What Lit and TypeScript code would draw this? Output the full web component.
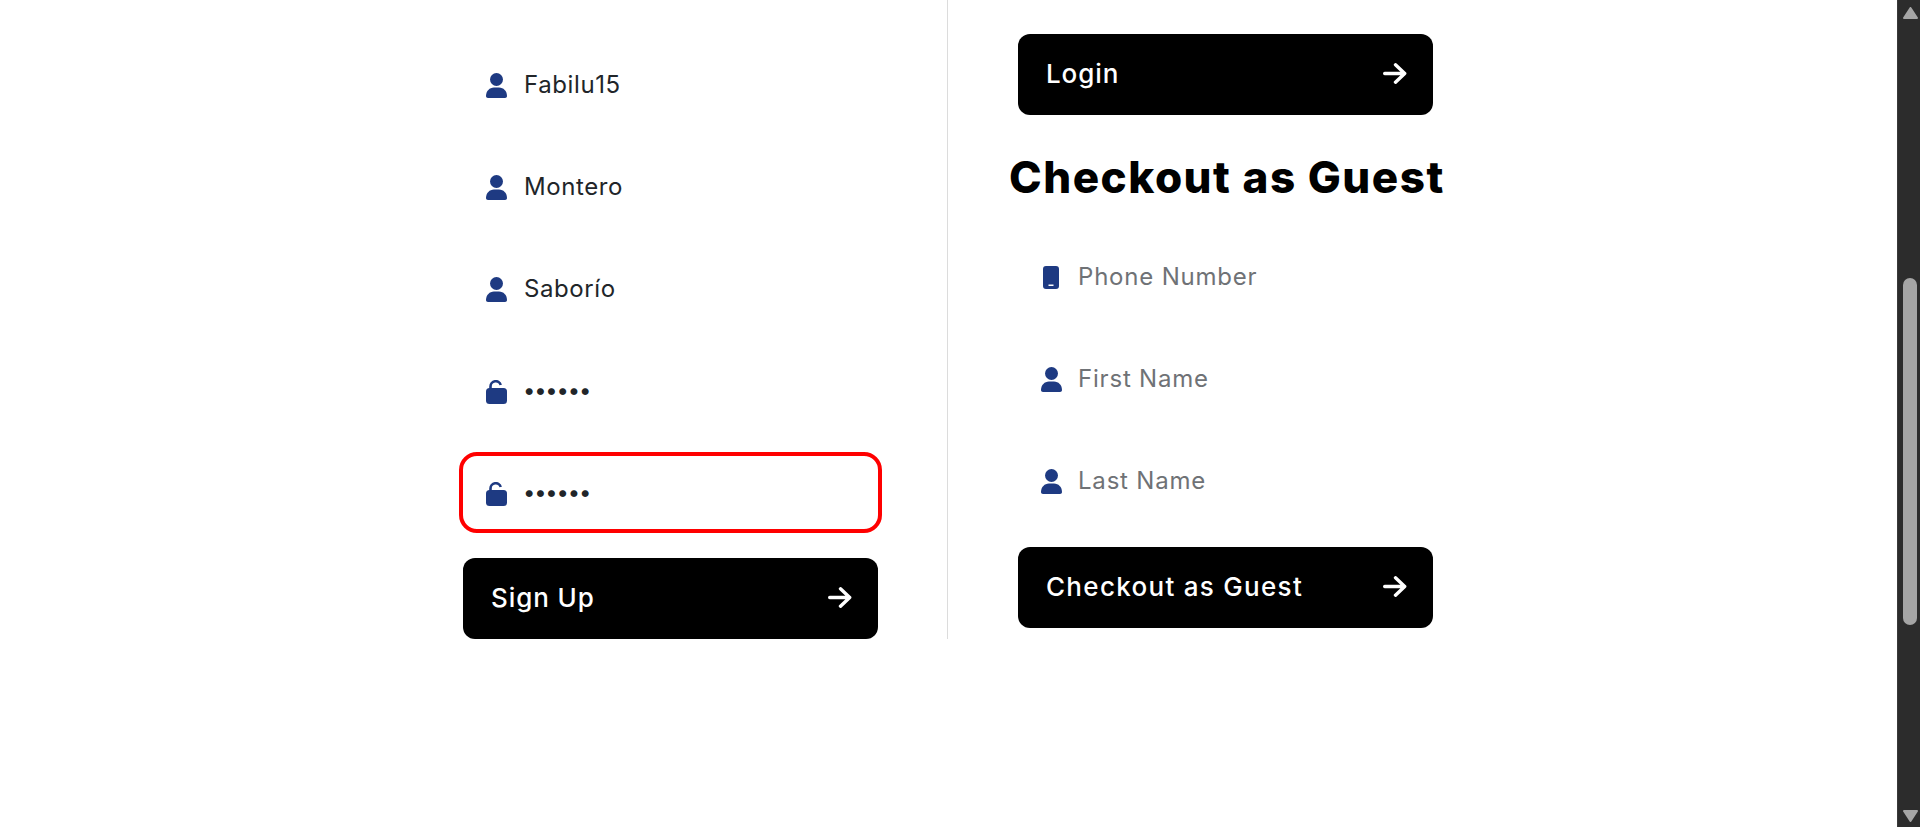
import { LitElement, html, css, svg } from 'lit';
import { customElement } from 'lit/decorators.js';

const userIcon = svg`<svg class="icon" viewBox="0 0 21 25" width="21" height="25"><circle cx="10.5" cy="6.5" r="6.5"/><path d="M0 23C0 18 3.600 14.500 8 14.500h5c4.400 0 8 3.500 8 8.500 0 1.200-.8 2-2 2H2c-1.200 0-2-.8-2-2z"/></svg>`;
const lockIcon = svg`<svg class="icon lock" viewBox="0 0 21 24" width="21" height="24"><path d="M4.500 9V6.500a5.200 5.200 0 0 1 10.200-1.500" fill="none" stroke="currentColor" stroke-width="2.600"/><rect x="0" y="8" width="21" height="16" rx="3.500"/></svg>`;
const phoneIcon = svg`<svg class="icon phone" viewBox="0 0 16 23" width="16" height="23"><path fill-rule="evenodd" d="M3 0h10a3 3 0 0 1 3 3v17a3 3 0 0 1-3 3H3a3 3 0 0 1-3-3V3a3 3 0 0 1 3-3zM5.500 18.500v1.500h5v-1.500z"/></svg>`;
const arrowIcon = svg`<svg class="arrow" viewBox="0 0 24 21" width="24" height="21"><path d="M1.700 10.500h20M12.500 1.800l9.200 8.700-9.200 8.700" fill="none" stroke="currentColor" stroke-width="3.400" stroke-linecap="round" stroke-linejoin="round"/></svg>`;

@customElement('app-root')
export class AppRoot extends LitElement {
  static styles = css`
    :host {
      display: flex;
      height: 100vh;
      overflow: hidden;
      background: #fff;
      font-family: Inter, "Liberation Sans", sans-serif;
    }

    .page {
      flex: 1;
      display: flex;
      align-items: flex-start;
      padding-left: 459px;
    }

    .left {
      width: 489px;
      height: 639px;
      padding-top: 44px;
      box-sizing: border-box;
      border-right: 1px solid #dcdcdc;
    }

    .right {
      width: 440px;
      margin-left: 70px;
      padding-top: 34px;
    }

    .field {
      width: 423px;
      height: 81px;
      margin-bottom: 21px;
      box-sizing: border-box;
      display: flex;
      align-items: center;
      padding-left: 23px;
      gap: 17px;
      border: 4px solid transparent;
      border-radius: 18px;
      font-size: 24px;
      letter-spacing: 0.6px;
      color: #212529;
    }

    .field.error {
      border-color: #f00;
      margin-bottom: 25px;
    }

    .field.placeholder {
      color: #6f7276;
      letter-spacing: 0.8px;
    }

    .right .field {
      padding-left: 19px;
      gap: 16px;
    }

    .slot {
      flex: none;
      width: 21px;
      display: flex;
      justify-content: center;
    }

    .icon {
      flex: none;
      margin-top: 2px;
      fill: #1e3a82;
      color: #1e3a82;
    }

    .icon.lock {
      margin-top: 3px;
    }

    .icon.phone {
      margin-right: 2px;
    }

    .dots {
      font-size: 22px;
      letter-spacing: -1.2px;
      margin-left: -1px;
      padding-bottom: 2px;
    }

    .btn {
      width: 415px;
      height: 81px;
      box-sizing: border-box;
      margin-left: 4px;
      padding: 0 26px 2px 28px;
      display: flex;
      align-items: center;
      justify-content: space-between;
      background: #000;
      color: #fff;
      border-radius: 12px;
      font-size: 26px;
      font-weight: 500;
      letter-spacing: 0.9px;
    }

    .right .btn {
      margin-left: 0;
    }

    .arrow {
      flex: none;
    }

    h2 {
      margin: 35px 0 32px -9px;
      font-size: 44px;
      line-height: 54px;
      font-weight: 800;
      letter-spacing: 1.5px;
      color: #000;
      white-space: nowrap;
    }

    /* collapses with the 21px margin under the last field */
    .right .btn.guest {
      margin-top: 26px;
      letter-spacing: 1.3px;
    }

    .scrollbar {
      flex: none;
      width: 23px;
      height: 100%;
      background: #2c2c2c;
      border-left: 1px solid #3a3a3a;
      box-sizing: border-box;
      display: flex;
      flex-direction: column;
      align-items: center;
      padding: 7px 0 5px 2px;
    }

    .track {
      flex: 1;
      align-self: stretch;
      padding: 259px 0 0 3px;
    }

    .thumb {
      width: 14px;
      height: 347px;
      border-radius: 7px;
      background: #a5a5a5;
    }

    .tri {
      flex: none;
      fill: #a5a5a5;
      stroke: #a5a5a5;
      stroke-width: 2;
      stroke-linejoin: round;
    }
  `;

  private field(icon: unknown, label: string, cls = '') {
    return html`<div class="field ${cls}"><span class="slot">${icon}</span><span>${label}</span></div>`;
  }

  private password(cls = '') {
    return html`<div class="field ${cls}"><span class="slot">${lockIcon}</span><span class="dots">••••••</span></div>`;
  }

  render() {
    return html`
      <div class="page">
        <section class="left">
          ${this.field(userIcon, 'Fabilu15')}
          ${this.field(userIcon, 'Montero')}
          ${this.field(userIcon, 'Saborío')}
          ${this.password()}
          ${this.password('error')}
          <div class="btn"><span>Sign Up</span>${arrowIcon}</div>
        </section>
        <section class="right">
          <div class="btn"><span>Login</span>${arrowIcon}</div>
          <h2>Checkout as Guest</h2>
          ${this.field(phoneIcon, 'Phone Number', 'placeholder')}
          ${this.field(userIcon, 'First Name', 'placeholder')}
          ${this.field(userIcon, 'Last Name', 'placeholder')}
          <div class="btn guest"><span>Checkout as Guest</span>${arrowIcon}</div>
        </section>
      </div>
      <aside class="scrollbar">
        <svg class="tri" viewBox="-1 -1 15 12" width="15" height="12"><path d="M6.500 0L13 10H0z"/></svg>
        <div class="track"><div class="thumb"></div></div>
        <svg class="tri" viewBox="-1 -1 15 12" width="15" height="12"><path d="M6.500 10L0 0h13z"/></svg>
      </aside>
    `;
  }
}
